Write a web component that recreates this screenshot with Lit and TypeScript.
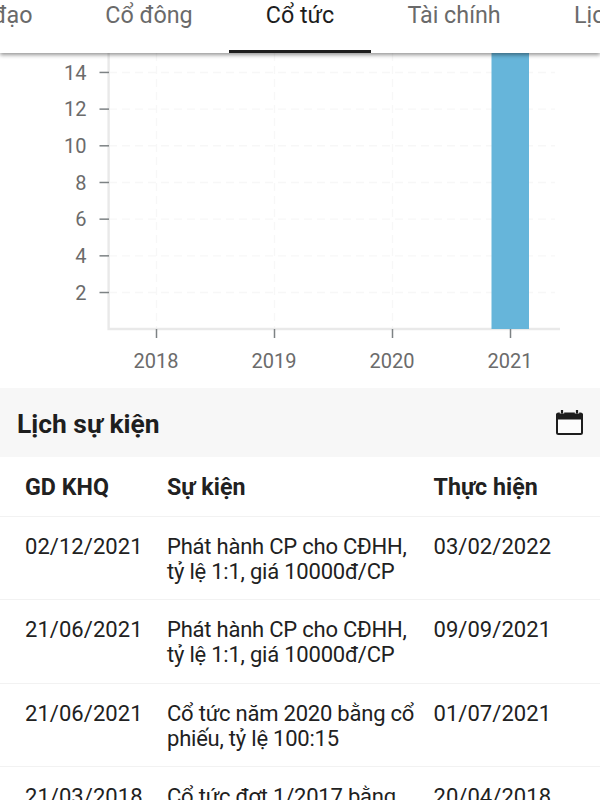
import { LitElement, html, css, svg } from "lit";
import { customElement, property } from "lit/decorators.js";
import { classMap } from "lit/directives/class-map.js";

interface DividendEvent {
  exDate: string;
  lines: string[];
  payDate: string;
}

const EVENTS: DividendEvent[] = [
  { exDate: "02/12/2021", lines: ["Phát hành CP cho CĐHH,", "tỷ lệ 1:1, giá 10000đ/CP"], payDate: "03/02/2022" },
  { exDate: "21/06/2021", lines: ["Phát hành CP cho CĐHH,", "tỷ lệ 1:1, giá 10000đ/CP"], payDate: "09/09/2021" },
  { exDate: "21/06/2021", lines: ["Cổ tức năm 2020 bằng cổ", "phiếu, tỷ lệ 100:15"], payDate: "01/07/2021" },
  { exDate: "21/03/2018", lines: ["Cổ tức đợt 1/2017 bằng"], payDate: "20/04/2018" },
];

@customElement("section-tabs")
class SectionTabs extends LitElement {
  static styles = css`
    :host {
      display: block;
      position: relative;
      z-index: 1;
      flex: none;
      height: 53px;
      background: #fff;
      box-shadow: 0 2px 4px rgba(0, 0, 0, 0.42);
    }
    .tabs {
      display: grid;
      grid-template-columns: 69px 160px 142px 166px 120px;
      height: 53px;
    }
    .tab {
      display: flex;
      justify-content: center;
      box-sizing: border-box;
      height: 53px;
      border-bottom: 3px solid transparent;
      padding-top: 1px;
      font-size: 23.3px;
      line-height: 28px;
      color: #6a6a6a;
      white-space: nowrap;
    }
    .first { justify-content: flex-end; padding-right: 36.5px; }
    .last { justify-content: flex-start; padding-left: 37px; }
    .active { color: #1d1d1d; border-bottom-color: #1d1d1d; }
  `;
  render() {
    const tabs = ["Lãnh đạo", "Cổ đông", "Cổ tức", "Tài chính", "Lịch sử"];
    return html`<nav class="tabs">
      ${tabs.map((t, i) => html`<div class=${classMap({ tab: true, first: i === 0, last: i === 4, active: i === 2 })}>${t}</div>`)}
    </nav>`;
  }
}

@customElement("dividend-chart")
class DividendChart extends LitElement {
  static styles = css`
    :host { display: block; flex: none; height: 335px; }
    svg { display: block; }
    .grid { stroke: #f7f7f7; stroke-width: 1.4; stroke-dasharray: 8 5; fill: none; }
    .axis { stroke: #e9e9e9; stroke-width: 2.4; fill: none; }
    .tick { stroke: #7d8284; stroke-width: 1.5; }
    .bar { fill: #66b5da; }
    text { font-size: 20px; fill: #6b6b6b; }
    .y { text-anchor: end; }
    .x { text-anchor: middle; }
  `;
  render() {
    const base = 276;
    const ys = [14, 12, 10, 8, 6, 4, 2].map((v) => ({ v, y: base + 0.2 - v * 18.34 }));
    const xs = [2018, 2019, 2020, 2021].map((v, i) => ({ v, x: 156.5 + i * 118 }));
    return html`<svg width="600" height="335" viewBox="0 0 600 335">
      ${xs.map(({ x }) => svg`<path class="grid" d="M${x} 0V${base}" />`)}
      ${ys.map(({ y }) => svg`<path class="grid" d="M109 ${y}H555" />`)}
      <path class="axis" d="M108.6 0V${base}H560" />
      <rect class="bar" x="491.5" y="-10" width="37.5" height="286" />
      ${ys.map(({ v, y }) => svg`<path class="tick" d="M99.5 ${y}H109" /><text class="y" x="86.5" y=${y + 7.2}>${v}</text>`)}
      ${xs.map(({ v, x }) => svg`<path class="tick" d="M${x} ${base}V${base + 9}" /><text class="x" x=${x - 0.5} y="315">${v}</text>`)}
    </svg>`;
  }
}

@customElement("section-header")
class SectionHeader extends LitElement {
  @property() heading = "";
  static styles = css`
    :host {
      display: flex;
      flex: none;
      align-items: center;
      justify-content: space-between;
      box-sizing: border-box;
      height: 69px;
      padding: 0 16px 0 17px;
      background: #f7f7f7;
      color: #1e1e1e;
    }
    .title { font-size: 26.4px; font-weight: 700; line-height: 30px; padding-top: 3px; }
    .calendar { display: block; }
  `;
  render() {
    return html`<span class="title">${this.heading}</span>
      <svg class="calendar" width="29" height="28" viewBox="0 0 29 28">
        <rect x="2" y="5" width="25" height="20" rx="1.5" fill="#fcfcfc" stroke="#1d1d1d" stroke-width="2" />
        <path d="M1 6Q1 3.5 3.5 3.5H25.5Q28 3.5 28 6V10.5H1Z" fill="#1d1d1d" />
        <path d="M4.8 2.5H9.2V4.5H4.8ZM19.8 2.5H24.2V4.5H19.8Z" fill="#f7f7f7" />
        <path d="M7 1V4.5M22 1V4.5" stroke="#1d1d1d" stroke-width="2.2" />
      </svg>`;
  }
}

@customElement("event-table")
class EventTable extends LitElement {
  @property({ attribute: false }) events: DividendEvent[] = [];
  static styles = css`
    :host { display: block; color: #212121; }
    .row {
      display: grid;
      grid-template-columns: 142px 266.5px 1fr;
      box-sizing: border-box;
      height: 83.3px;
      padding: 17px 0 0 25px;
      border-bottom: 1.5px solid #f2f2f2;
      font-size: 22px;
      line-height: 25px;
      letter-spacing: 0.05px;
      white-space: nowrap;
    }
    .head { height: 60px; padding-top: 18px; font-size: 23.2px; font-weight: 700; }
    .line { display: block; letter-spacing: -0.22px; }
  `;
  render() {
    return html`
      <div class="row head"><span>GD KHQ</span><span>Sự kiện</span><span>Thực hiện</span></div>
      ${this.events.map((e) => html`<div class="row">
        <span>${e.exDate}</span>
        <span>${e.lines.map((l) => html`<span class="line">${l}</span>`)}</span>
        <span>${e.payDate}</span>
      </div>`)}
    `;
  }
}

@customElement("app-root")
class AppRoot extends LitElement {
  static styles = css`
    :host {
      display: flex;
      flex-direction: column;
      width: 600px;
      height: 800px;
      overflow: hidden;
      background: #fff;
      font-family: Roboto, "Noto Sans", sans-serif;
    }
  `;
  render() {
    return html`
      <section-tabs></section-tabs>
      <dividend-chart></dividend-chart>
      <section-header heading="Lịch sự kiện"></section-header>
      <event-table .events=${EVENTS}></event-table>
    `;
  }
}
